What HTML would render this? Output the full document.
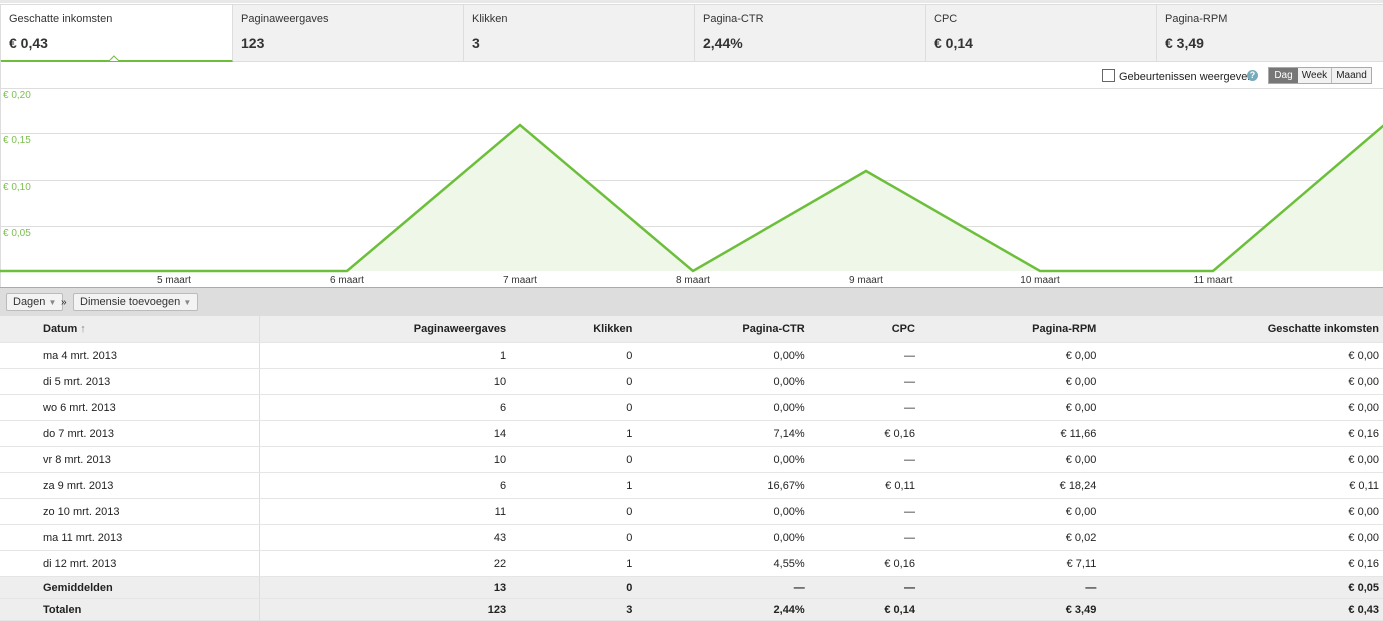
<!DOCTYPE html><html><head><style>
body{margin:0;width:1383px;height:621px;overflow:hidden;font-family:"Liberation Sans",Arial,sans-serif;font-size:11px;color:#222;background:#fff;position:relative}
.tabs{position:absolute;top:4px;left:0;width:1383px;height:56px;border-top:1px solid #ddd;border-bottom:1px solid #ddd;background:#f1f1f1}
.tab{position:absolute;top:0;height:56px;border-right:1px solid #ddd;box-sizing:border-box}
.tab .t{position:absolute;left:8px;top:8px;font-size:11px;color:#333}
.tab .v{position:absolute;left:8px;top:30px;font-size:14px;font-weight:bold;color:#333}
.a{position:absolute}
table{position:absolute;top:316px;left:0;width:1383px;border-collapse:collapse}
td{height:25px;border-bottom:1px solid #e5e5e5;text-align:right;font-size:11px;color:#222;padding:0}
td.d{text-align:left;padding-left:43px;border-right:1px solid #ddd}
tr.h td{background:#eee;font-weight:bold;height:26px}
tr.s td{background:#eee;font-weight:bold;height:21px}
.btn{position:absolute;top:293px;height:16px;border:1px solid #bbb;background:#f3f3f3;border-radius:2px;font-size:11px;line-height:16px;padding:0 6px;color:#333}
</style></head><body>
<div style="position:absolute;top:0;left:0;width:1383px;height:3px;background:#e8e8e8"></div>
<div class="tabs">
<div class="tab" style="left:0;width:233px;background:#fff;border-left:1px solid #ddd;border-bottom:2px solid #6cbf3a;height:57px"><div class="t">Geschatte inkomsten</div><div class="v">€ 0,43</div>
<svg class="a" style="left:108px;top:50px" width="10" height="6"><path d="M0 6L5 1L10 6" fill="#fff" stroke="#6cbf3a"/></svg></div>
<div class="tab" style="left:233px;width:231px"><div class="t">Paginaweergaves</div><div class="v">123</div></div>
<div class="tab" style="left:464px;width:231px"><div class="t">Klikken</div><div class="v">3</div></div>
<div class="tab" style="left:695px;width:231px"><div class="t">Pagina-CTR</div><div class="v">2,44%</div></div>
<div class="tab" style="left:926px;width:231px"><div class="t">CPC</div><div class="v">€ 0,14</div></div>
<div class="tab" style="left:1157px;width:226px;border-right:none"><div class="t">Pagina-RPM</div><div class="v">€ 3,49</div></div>
</div>
<div class="a" style="left:1102px;top:69px;width:11px;height:11px;border:1px solid #666;background:#fff"></div>
<div class="a" style="left:1119px;top:71px;font-size:11px">Gebeurtenissen weergeven</div>
<div class="a" style="left:1247px;top:70px;width:11px;height:11px;border-radius:50%;background:#7ab;color:#fff;font-size:9px;text-align:center;line-height:11px;font-weight:bold">?</div>
<div class="a" style="left:1268px;top:67px;width:102px;height:15px;border:1px solid #aaa;font-size:10px;line-height:15px;display:flex">
<div style="width:29px;background:#777;color:#fff;text-align:center">Dag</div><div style="width:33px;background:#f2f2f2;text-align:center;border-right:1px solid #bbb">Week</div><div style="flex:1;background:#f2f2f2;text-align:center">Maand</div></div>
<svg class="a" style="left:0;top:0" width="1383" height="288">
<line x1="0" y1="88.5" x2="1383" y2="88.5" stroke="#ddd"/>
<line x1="0" y1="133.5" x2="1383" y2="133.5" stroke="#ddd"/>
<line x1="0" y1="180.5" x2="1383" y2="180.5" stroke="#ddd"/>
<line x1="0" y1="226.5" x2="1383" y2="226.5" stroke="#ddd"/>
<line x1="0.5" y1="61" x2="0.5" y2="288" stroke="#ddd"/>
<line x1="0" y1="287.5" x2="1383" y2="287.5" stroke="#aaa"/>
<path d="M0 271L347 271L520 125L693 271L866 171L1040 271L1213 271L1390 120L1390 271Z" fill="#eef7e8"/>
<path d="M0 271L347 271L520 125L693 271L866 171L1040 271L1213 271L1390 120" fill="none" stroke="#6cbf3a" stroke-width="2.5"/>
<g font-family="Liberation Sans" font-size="10" fill="#7bbf50"><text x="3" y="98">€ 0,20</text><text x="3" y="143">€ 0,15</text><text x="3" y="190">€ 0,10</text><text x="3" y="236">€ 0,05</text></g>
<g font-family="Liberation Sans" font-size="10" fill="#333" text-anchor="middle"><text x="174" y="283">5 maart</text><text x="347" y="283">6 maart</text><text x="520" y="283">7 maart</text><text x="693" y="283">8 maart</text><text x="866" y="283">9 maart</text><text x="1040" y="283">10 maart</text><text x="1213" y="283">11 maart</text></g>
</svg>
<div class="a" style="left:0;top:288px;width:1383px;height:28px;background:#ddd;border-bottom:1px solid #bbb"></div>
<div class="btn" style="left:6px">Dagen <span style="color:#888;font-size:8px">▼</span></div>
<div class="a" style="left:61px;top:297px;font-size:10px">»</div>
<div class="btn" style="left:73px">Dimensie toevoegen <span style="color:#888;font-size:8px">▼</span></div>
<table>
<colgroup><col style="width:259px"><col style="width:246px"><col style="width:126px"><col style="width:172px"><col style="width:110px"><col style="width:181px"><col style="width:286px"></colgroup>
<tr class="h"><td class="d">Datum <span style="color:#888">↑</span></td><td>Paginaweergaves</td><td>Klikken</td><td>Pagina-CTR</td><td>CPC</td><td>Pagina-RPM</td><td style="padding-right:4px">Geschatte inkomsten</td></tr>
<tr><td class="d">ma 4 mrt. 2013</td><td>1</td><td>0</td><td>0,00%</td><td>—</td><td>€ 0,00</td><td style="padding-right:4px">€ 0,00</td></tr>
<tr><td class="d">di 5 mrt. 2013</td><td>10</td><td>0</td><td>0,00%</td><td>—</td><td>€ 0,00</td><td style="padding-right:4px">€ 0,00</td></tr>
<tr><td class="d">wo 6 mrt. 2013</td><td>6</td><td>0</td><td>0,00%</td><td>—</td><td>€ 0,00</td><td style="padding-right:4px">€ 0,00</td></tr>
<tr><td class="d">do 7 mrt. 2013</td><td>14</td><td>1</td><td>7,14%</td><td>€ 0,16</td><td>€ 11,66</td><td style="padding-right:4px">€ 0,16</td></tr>
<tr><td class="d">vr 8 mrt. 2013</td><td>10</td><td>0</td><td>0,00%</td><td>—</td><td>€ 0,00</td><td style="padding-right:4px">€ 0,00</td></tr>
<tr><td class="d">za 9 mrt. 2013</td><td>6</td><td>1</td><td>16,67%</td><td>€ 0,11</td><td>€ 18,24</td><td style="padding-right:4px">€ 0,11</td></tr>
<tr><td class="d">zo 10 mrt. 2013</td><td>11</td><td>0</td><td>0,00%</td><td>—</td><td>€ 0,00</td><td style="padding-right:4px">€ 0,00</td></tr>
<tr><td class="d">ma 11 mrt. 2013</td><td>43</td><td>0</td><td>0,00%</td><td>—</td><td>€ 0,02</td><td style="padding-right:4px">€ 0,00</td></tr>
<tr><td class="d">di 12 mrt. 2013</td><td>22</td><td>1</td><td>4,55%</td><td>€ 0,16</td><td>€ 7,11</td><td style="padding-right:4px">€ 0,16</td></tr>
<tr class="s"><td class="d">Gemiddelden</td><td>13</td><td>0</td><td>—</td><td>—</td><td>—</td><td style="padding-right:4px">€ 0,05</td></tr>
<tr class="s"><td class="d">Totalen</td><td>123</td><td>3</td><td>2,44%</td><td>€ 0,14</td><td>€ 3,49</td><td style="padding-right:4px">€ 0,43</td></tr>
</table>
</body></html>
